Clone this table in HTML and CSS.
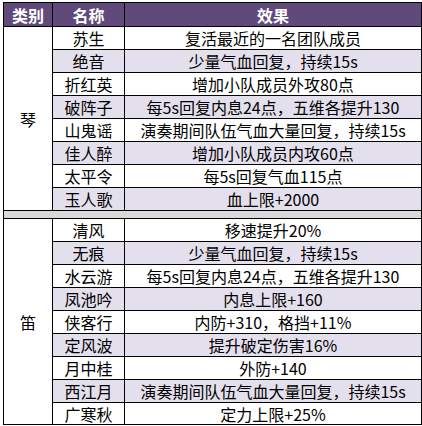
FILE: index.html
```html
<!DOCTYPE html>
<html lang="zh">
<head>
<meta charset="utf-8">
<link rel="stylesheet" href="styles.css">
</head>
<body>
<div class="table">
  <div class="cell head">类别</div>
  <div class="cell head">名称</div>
  <div class="cell head">效果</div>

  <div class="cell cat cat-qin">琴</div>
  <div class="cell">苏生</div><div class="cell">复活最近的一名团队成员</div>
  <div class="cell alt">绝音</div><div class="cell alt">少量气血回复，持续15s</div>
  <div class="cell">折红英</div><div class="cell">增加小队成员外攻80点</div>
  <div class="cell alt">破阵子</div><div class="cell alt">每5s回复内息24点，五维各提升130</div>
  <div class="cell">山鬼谣</div><div class="cell">演奏期间队伍气血大量回复，持续15s</div>
  <div class="cell alt">佳人醉</div><div class="cell alt">增加小队成员内攻60点</div>
  <div class="cell">太平令</div><div class="cell">每5s回复气血115点</div>
  <div class="cell alt">玉人歌</div><div class="cell alt">血上限+2000</div>

  <div class="cell sep"></div>

  <div class="cell cat cat-di">笛</div>
  <div class="cell">清风</div><div class="cell">移速提升20%</div>
  <div class="cell alt">无痕</div><div class="cell alt">少量气血回复，持续15s</div>
  <div class="cell">水云游</div><div class="cell">每5s回复内息24点，五维各提升130</div>
  <div class="cell alt">凤池吟</div><div class="cell alt">内息上限+160</div>
  <div class="cell">侠客行</div><div class="cell">内防+310，格挡+11%</div>
  <div class="cell alt">定风波</div><div class="cell alt">提升破定伤害16%</div>
  <div class="cell">月中桂</div><div class="cell">外防+140</div>
  <div class="cell alt">西江月</div><div class="cell alt">演奏期间队伍气血大量回复，持续15s</div>
  <div class="cell">广寒秋</div><div class="cell">定力上限+25%</div>
</div>
</body>
</html>
```
FILE: styles.css
```css
html, body {
  margin: 0;
  padding: 0;
  background: #ffffff;
}
body {
  font-family: "Noto Sans CJK SC", "Noto Sans", sans-serif;
  font-size: 16px;
  color: #000000;
}
.table {
  margin: 2px 0 0 3px;
  width: 419px;
  box-sizing: border-box;
  border-top: 1px solid #000;
  border-left: 1px solid #000;
  display: grid;
  grid-template-columns: 49px 72px 297px;
  grid-template-rows: 24px repeat(8, 23px) 8px repeat(8, 23px) 22px;
}
.cell {
  box-sizing: border-box;
  border-right: 1px solid #000;
  border-bottom: 1px solid #000;
  display: flex;
  align-items: center;
  justify-content: center;
  white-space: nowrap;
  line-height: 1;
  background: #ffffff;
}
.head {
  background: #604a7b;
  color: #ffffff;
  font-weight: bold;
}
.alt {
  background: #e4dfec;
}
.cat-qin {
  grid-column: 1;
  grid-row: 2 / span 8;
}
.cat-di {
  grid-column: 1;
  grid-row: 11 / span 9;
}
.sep {
  grid-column: 1 / -1;
  background: #d9d9d9;
}
```
